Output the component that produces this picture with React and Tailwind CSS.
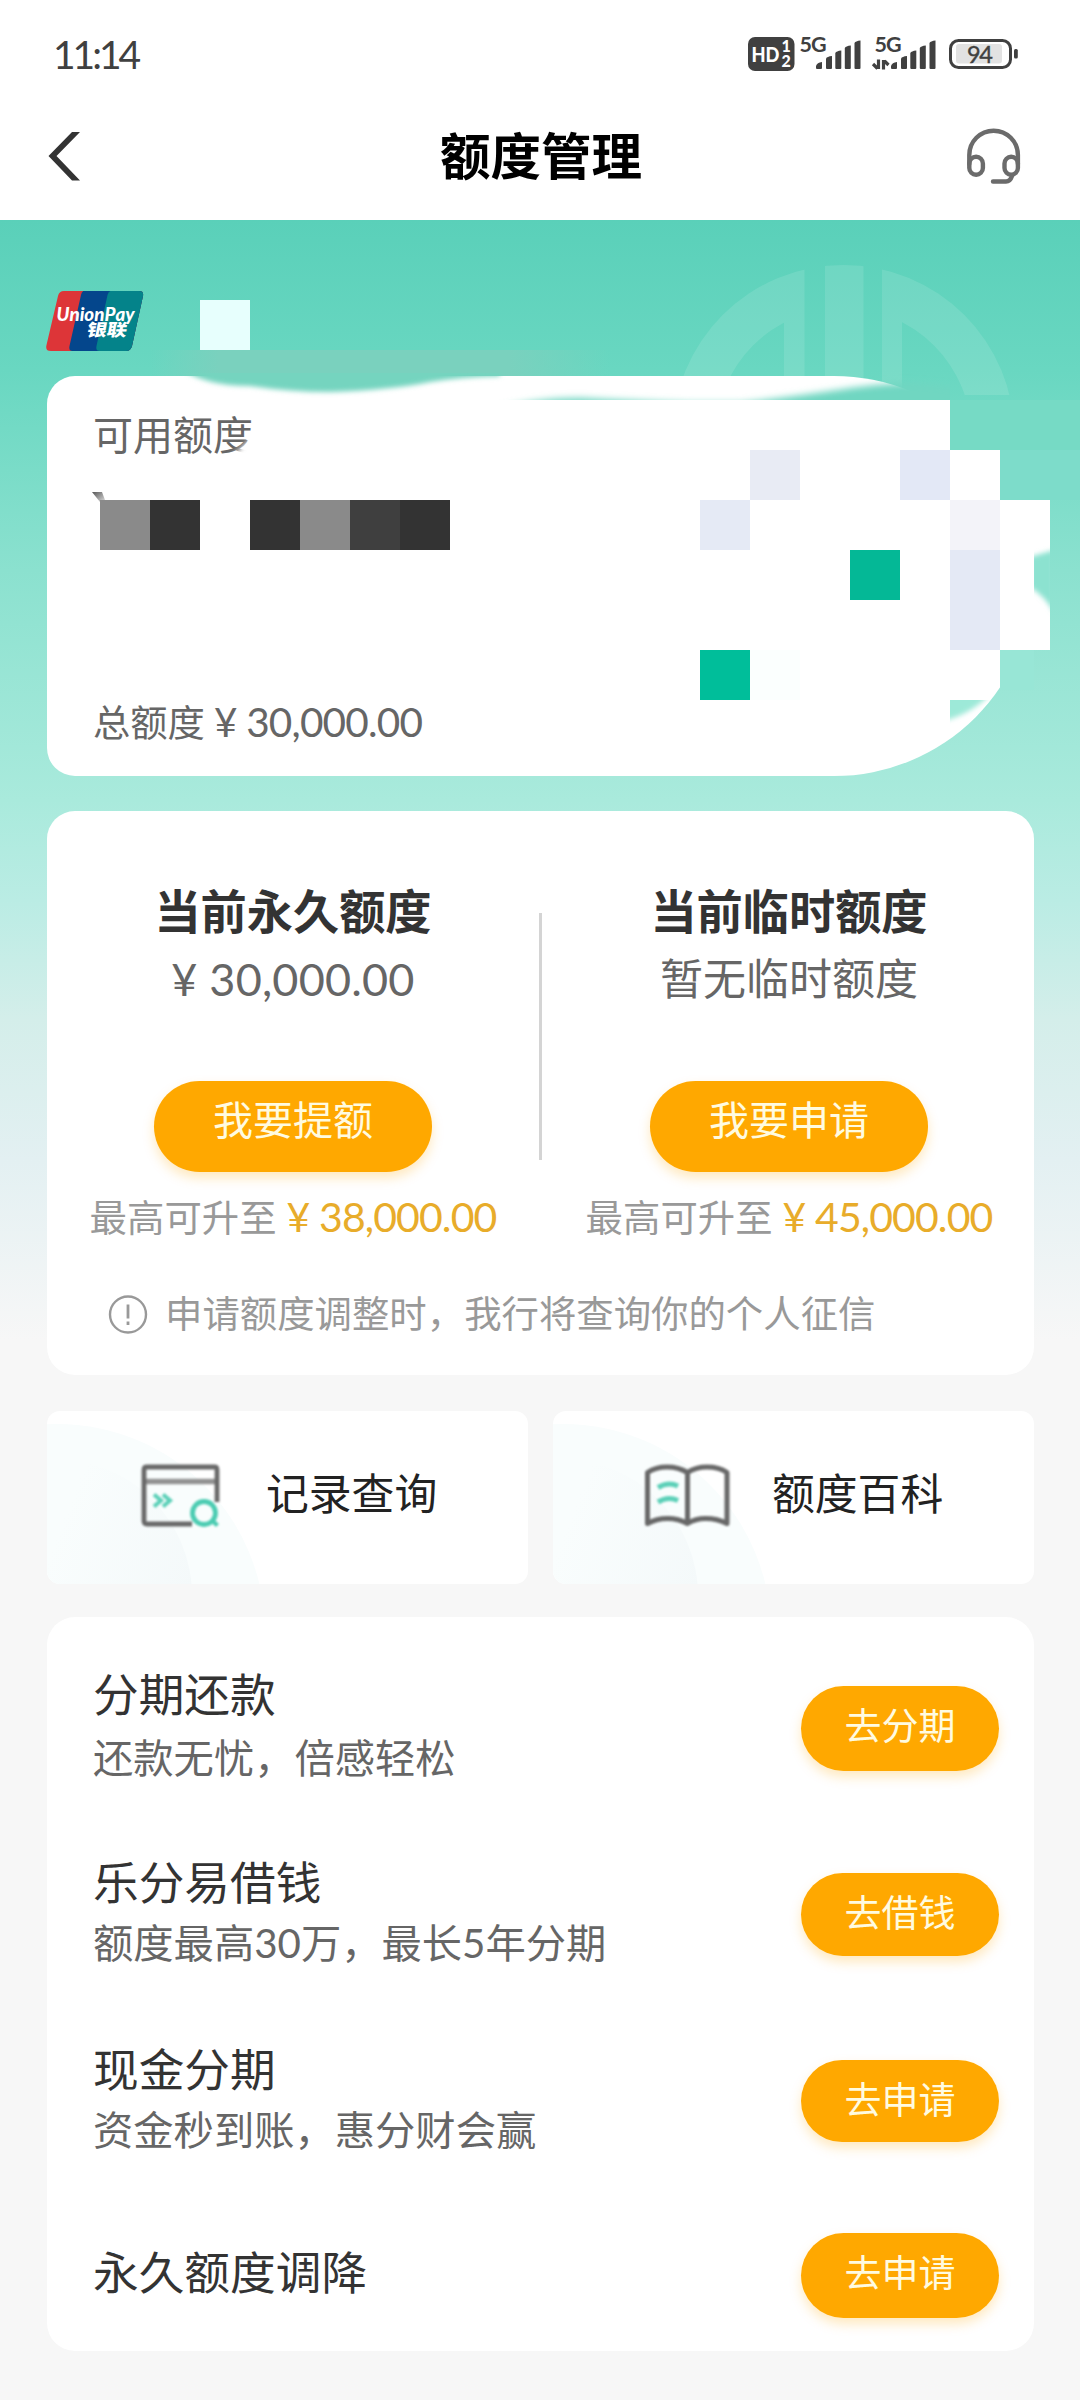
import React from 'react';

const products = [
    { id: 1, title: '分期还款', desc: '还款无忧，倍感轻松', action: '去分期', row: 'mt-[55px]', gap: 'mt-[17px]', button: 'mt-[14px] h-[85px]' },
    { id: 2, title: '乐分易借钱', desc: '额度最高30万，最长5年分期', action: '去借钱', row: 'mt-[79px]', gap: 'mt-[14px]', button: 'mt-[13px] h-[83px]' },
    { id: 3, title: '现金分期', desc: '资金秒到账，惠分财会赢', action: '去申请', row: 'mt-[81px]', gap: 'mt-[14px]', button: 'mt-[13px] h-[82px]' },
    { id: 4, title: '永久额度调降', desc: null, action: '去申请', row: 'mt-[80px]', gap: '', button: 'h-[85px]' },
];

// 50px blocks that cover the private part of the card
const maskBlocks = [
    { x: 200, y: 300, color: '#e7fffd' },
    { x: 100, y: 500, color: '#8a8a8a' },
    { x: 150, y: 500, color: '#333333' },
    { x: 250, y: 500, color: '#333333' },
    { x: 300, y: 500, color: '#8a8a8a' },
    { x: 350, y: 500, color: '#3f3f3f' },
    { x: 400, y: 500, color: '#333333' },
    { x: 750, y: 450, color: '#e8ebf4' },
    { x: 900, y: 450, color: '#e3e8f6' },
    { x: 700, y: 500, color: '#e5eaf5' },
    { x: 950, y: 500, color: '#f3f3f9' },
    { x: 950, y: 550, color: '#e4e9f5' },
    { x: 950, y: 600, color: '#e4e9f5' },
    { x: 850, y: 550, color: '#04b896' },
    { x: 700, y: 650, color: '#00be9a' },
    { x: 750, y: 650, color: '#fbfffe' },
];

function SignalBars() {
    return (
        <g fill="#404040">
            <path d="M0 27v-2q1-3.500 6-4v6q0 1-1 1H1q-1 0-1-1z" />
            <path d="M10 17.500q1-2 6-2.500v12q0 1-1 1h-4q-1 0-1-1z" />
            <path d="M19.300 12q1-2 6-2.500v17.500q0 1-1 1h-4q-1 0-1-1z" />
            <path d="M28.800 7q1-2 6-2.500v22.500q0 1-1 1h-4q-1 0-1-1z" />
            <path d="M38.500 2q1-2 6-2.500v27.500q0 1-1 1h-4q-1 0-1-1z" />
        </g>
    );
}

function StatusIcons() {
    return (
        <svg width="272" height="54" viewBox="748 24 272 54" fontFamily="Lato, sans-serif">
            <rect x="748" y="37" width="46.500" height="34" rx="7" fill="#404040" />
            <text x="751.500" y="61.500" fontSize="20" fontWeight="900" fill="#fff" textLength="28" lengthAdjust="spacingAndGlyphs">HD</text>
            <text x="781.500" y="52.300" fontSize="16" fontWeight="900" fill="#fff">1</text>
            <text x="781.500" y="67" fontSize="16" fontWeight="900" fill="#fff">2</text>
            <text x="799.500" y="52" fontSize="21.500" fontWeight="700" fill="#404040" textLength="27">5G</text>
            <g transform="translate(816 41)"><SignalBars /></g>
            <text x="874.500" y="52" fontSize="21.500" fontWeight="700" fill="#404040" textLength="27">5G</text>
            <path d="M878.500 59.500v9.500M873 64l4.500 4.500M883.500 69.500v-9.500M884.500 61l4 4" stroke="#404040" strokeWidth="3.200" fill="none" />
            <g transform="translate(891 41)"><SignalBars /></g>
            <rect x="950.500" y="40.500" width="60" height="27" rx="8" fill="#fff" stroke="#404040" strokeWidth="3" />
            <rect x="956" y="44" width="46" height="19.500" rx="3" fill="#e2e2e2" />
            <rect x="1014" y="49" width="3.800" height="9.500" rx="1.500" fill="#404040" />
            <text x="967" y="62.500" fontSize="23.500" fill="#404040" stroke="#404040" strokeWidth="0.400" textLength="26">94</text>
        </svg>
    );
}

function Header() {
    return (
        <header className="h-[220px] bg-white">
            <div className="flex h-[108px] items-start justify-between pl-[53px] pr-[60px]">
                <span className="pt-[30px] text-[39px] leading-[48px] tracking-[-3px] text-[#404040]">11:14</span>
                <div className="pt-[24px]">
                    <StatusIcons />
                </div>
            </div>
            <div className="flex h-[96px] items-center justify-between pl-[48px] pr-[58px]">
                <svg width="56" height="50" viewBox="48 131 56 50">
                    <path d="M72 132h8l-23.500 24 23.500 24.500h-8l-23.500-24.500z" fill="#333" />
                </svg>
                <h1 className="ml-[12px] text-[50.5px] leading-[60px] font-bold text-black">额度管理</h1>
                <svg width="56" height="58" viewBox="966 127 56 58" fill="none" stroke="#6b6b6b" strokeWidth="4.400" strokeLinecap="round">
                    <path d="M969.300 164V155a24.300 24.300 0 0 1 48.600 0V164" />
                    <path d="M969.300 163.500a6.800 6.800 0 0 1 13.600 0v4.500a6.800 6.800 0 0 1-13.600 0z" />
                    <path d="M1004.500 163.500a6.700 6.700 0 0 1 13.400 0v4.500a6.700 6.700 0 0 1-13.400 0z" />
                    <path d="M1012 176c-1 3-3 5.500-6 5.500h-13" />
                </svg>
            </div>
        </header>
    );
}

function UnionPayLogo() {
    return (
        <svg width="98" height="61" viewBox="46 290 98 61">
            <defs>
                <clipPath id="unionpay">
                    <path d="M64 291h75q5 0 4 5l-11 50q-1.200 5-6 5H51q-6 0-4.500-6l11.500-49q1.200-5 6-5z" />
                </clipPath>
            </defs>
            <g clipPath="url(#unionpay)">
                <rect x="46" y="290" width="98" height="61" fill="#dd3538" />
                <path d="M87 290q-5 0-6 5l-11.500 51q-1 5 3 5h71V290z" fill="#04468c" />
                <path d="M114 290q-5 0-6.500 5l-11 51q-1 5 3 5h45V290z" fill="#04838a" />
            </g>
            <text x="56.500" y="321" fontFamily="Lato, sans-serif" fontSize="19" fontWeight="900" fontStyle="italic" fill="#fff" textLength="78" lengthAdjust="spacingAndGlyphs">UnionPay</text>
            <text x="86" y="336" fontFamily="'Noto Sans CJK SC', sans-serif" fontSize="17" fontWeight="900" fill="#fff" textLength="40" lengthAdjust="spacingAndGlyphs" transform="translate(63 0) skewX(-10.600)">银联</text>
        </svg>
    );
}

function Watermark() {
    return (
        <svg className="absolute left-0 top-0" width="1080" height="180" viewBox="0 220 1080 180">
            <defs>
                <mask id="ring">
                    <circle cx="843.500" cy="436" r="171" fill="#fff" />
                    <circle cx="843.500" cy="436" r="128" fill="#000" />
                    <rect x="784" y="296" width="118" height="104" fill="#fff" />
                    <rect x="804.500" y="220" width="20.500" height="200" fill="#000" />
                    <rect x="863.500" y="220" width="18.500" height="200" fill="#000" />
                </mask>
            </defs>
            <rect x="660" y="240" width="360" height="155" fill="#fff" fillOpacity="0.110" mask="url(#ring)" />
        </svg>
    );
}

function CardMask() {
    return (
        <svg className="absolute left-0 top-0" width="1080" height="580" viewBox="0 220 1080 580">
            <defs>
                <filter id="soft" x="-10%" y="-100%" width="120%" height="300%">
                    <feGaussianBlur stdDeviation="2.500" />
                </filter>
                <filter id="softer" x="-10%" y="-100%" width="120%" height="300%">
                    <feGaussianBlur stdDeviation="3.500" />
                </filter>
                <clipPath id="cardTop">
                    <rect x="150" y="373" width="800" height="27" />
                </clipPath>
                <clipPath id="cardRight">
                    <rect x="1034" y="540" width="16" height="80" />
                </clipPath>
                <clipPath id="cardCorner">
                    <rect x="950" y="700" width="50" height="40" />
                </clipPath>
                <linearGradient id="strip">
                    <stop offset="0" stopColor="#7ad1be" stopOpacity="0" />
                    <stop offset="0.150" stopColor="#7ad1be" />
                    <stop offset="0.780" stopColor="#7ad1be" />
                    <stop offset="1" stopColor="#7ad1be" stopOpacity="0" />
                </linearGradient>
                <linearGradient id="tip" x1="0" y1="0" x2="1" y2="1">
                    <stop offset="0" stopColor="#555" />
                    <stop offset="1" stopColor="#ddd" />
                </linearGradient>
            </defs>
            <rect x="150" y="350" width="460" height="26" fill="url(#strip)" />
            <g clipPath="url(#cardTop)">
                <path d="M180 368q25 18 70 18q40 6 80 6q60-2 100-10q30-5 70-6v-8z" fill="#74d4bf" filter="url(#soft)" />
                <path d="M490 412q40-14 90-14q60 3 110 5h50q50-6 90-12q50-8 80-8q30 2 50 6v30h-470z" fill="#6fd6c1" filter="url(#softer)" />
            </g>
            <rect x="840" y="400" width="110" height="50" fill="#fff" />
            <rect x="950" y="400" width="130" height="50" fill="#76dac5" />
            <rect x="950" y="450" width="50" height="50" fill="#fff" />
            <rect x="1000" y="450" width="80" height="50" fill="#7ddcca" />
            <rect x="1000" y="500" width="50" height="150" fill="#fff" />
            <g clipPath="url(#cardRight)">
                <path d="M1030 557l24-7v63q-8-16-24-26z" fill="#8ce2d0" filter="url(#soft)" />
            </g>
            <rect x="1000" y="650" width="34" height="40" fill="#98e6d6" />
            <g clipPath="url(#cardCorner)">
                <path d="M940 690h54q-20 24-54 32z" fill="#9de9d8" filter="url(#soft)" />
            </g>
            {maskBlocks.map((b) => (
                <rect key={`${b.x}-${b.y}`} x={b.x} y={b.y} width="50" height="50" fill={b.color} />
            ))}
            <path d="M92 492h10l3 8h-5v2z" fill="url(#tip)" />
            <path d="M262 428l-34 32h34z" fill="#fff" filter="url(#soft)" />
        </svg>
    );
}

function CreditCard() {
    return (
        <section className="relative h-[591px]">
            <Watermark />
            <div className="flex h-[156px] items-start pl-[46px] pt-[70px]">
                <UnionPayLogo />
            </div>
            <div className="ml-[47px] mr-[46px] flex h-[400px] flex-col justify-between rounded-l-[28px] rounded-r-[200px] bg-white pl-[46px] pb-[28px] pt-[34px] text-[#666]">
                <p className="text-[40px] leading-[50px]">可用额度</p>
                <p className="text-[37.3px] leading-[50px]">
                    总额度<span className="ml-[9px] text-[40.5px] tracking-[-0.8px]">¥ 30,000.00</span>
                </p>
            </div>
            <CardMask />
        </section>
    );
}

function LimitColumn({ title, children, action, max }) {
    return (
        <div className="flex w-[494px] flex-col items-center">
            <h2 className="text-[46.2px] leading-[60px] font-bold text-[#333]">{title}</h2>
            {children}
            <button className="mt-[71px] flex h-[91px] w-[278px] justify-center rounded-full bg-[#ffa800] pt-[14px] text-[40px] leading-[50px] text-[#fffbe0] shadow-[0_6px_12px_rgba(255,168,0,0.25)]">
                {action}
            </button>
            <p className="mt-[20px] text-[37.4px] leading-[50px] whitespace-nowrap text-[#999]">
                最高可升至<span className="ml-[10px] text-[41px] tracking-[-0.9px] text-[#e8ac2a]">¥ {max}</span>
            </p>
        </div>
    );
}

function LimitPanel() {
    return (
        <section className="ml-[47px] mr-[46px] h-[564px] rounded-[28px] bg-white pt-[70px]">
            <div className="flex">
                <div className="-ml-[1px]">
                    <LimitColumn title="当前永久额度" action="我要提额" max="38,000.00">
                        <p className="mt-[8px] mb-[1px] text-[45px] leading-[60px] tracking-[0.2px] text-[#666]">¥ 30,000.00</p>
                    </LimitColumn>
                </div>
                <div className="-ml-[1px] mt-[32px] h-[247px] w-[3px] shrink-0 bg-[#d4d4d4]"></div>
                <div>
                    <LimitColumn title="当前临时额度" action="我要申请" max="45,000.00">
                        <p className="mt-[8px] mb-[1px] text-[43px] leading-[60px] text-[#666]">暂无临时额度</p>
                    </LimitColumn>
                </div>
            </div>
            <div className="mt-[46px] flex items-center pl-[61px]">
                <svg width="40" height="42" viewBox="0 0 40 42" fill="none" stroke="#999">
                    <circle cx="20" cy="21.500" r="18" strokeWidth="2.400" />
                    <path d="M20 11.500v14M20 28.500v3.500" strokeWidth="2.800" />
                </svg>
                <p className="ml-[17px] text-[37.4px] leading-[50px] text-[#999]">申请额度调整时，我行将查询你的个人征信</p>
            </div>
        </section>
    );
}

function RecordIcon() {
    return (
        <svg width="80" height="64" viewBox="142 1464 80 64" fill="none" stroke="#686868" strokeWidth="4.800" className="blur-[0.9px]">
            <path d="M145 1481.500h72" stroke="#929292" strokeWidth="5.500" />
            <path d="M193 1524h-45q-3 0-3-3v-51q0-3 3-3h67.500q2.500 0 2.500 3v32" />
            <path d="M155 1494.500l7 6-7 6M164 1494.500l7 6-7 6" stroke="#5cd0b8" strokeWidth="4" />
            <circle cx="205" cy="1513" r="11.500" stroke="#4cccb2" strokeWidth="4.800" />
            <path d="M212.500 1520l6 5.500" stroke="#4cccb2" strokeWidth="4.400" />
        </svg>
    );
}

function BookIcon() {
    return (
        <svg width="86" height="64" viewBox="644 1464 86 64" fill="none" stroke="#686868" strokeWidth="5" strokeLinejoin="round" className="blur-[0.9px]">
            <path d="M687.500 1472.500q-9-5.500-20.500-5.500-11 0-19.500 5.500v51q9-5 20-5 11 0 20 5 8-5 18-5 12 0 21.500 5v-51q-8-5.500-20-5.500-11 0-19.500 5.500zv51" />
            <path d="M658 1487.500q10-6 20-1.500M658 1502q10-6 20-1.500" stroke="#5cd0b8" strokeWidth="5" />
        </svg>
    );
}

function EntryCard({ icon, label, className }) {
    return (
        <div className={`relative flex h-[173px] items-center overflow-hidden rounded-[13px] bg-white ${className}`}>
            <svg className="absolute left-0 top-0" width="240" height="173" viewBox="0 0 240 173">
                <defs>
                    <linearGradient id="petal" x1="0.500" y1="0.300" x2="1" y2="0.500">
                        <stop offset="0" stopColor="#f4f9fa" stopOpacity="0" />
                        <stop offset="1" stopColor="#f4f9fa" />
                    </linearGradient>
                </defs>
                <circle cx="10" cy="221" r="208" fill="#f9fdfd" />
                <circle cx="8" cy="185" r="137" fill="url(#petal)" />
            </svg>
            <div className="relative pb-[3px]">{icon}</div>
            <span className="relative pb-[8px] text-[42.8px] leading-[50px] text-[#222]">{label}</span>
        </div>
    );
}

function ProductList() {
    return (
        <section className="ml-[47px] mr-[46px] mt-[33px] h-[734px] overflow-hidden rounded-[28px] bg-white pl-[46px] pr-[35px]">
            {products.map((p) => (
                <div key={p.id} className={`flex items-start justify-between ${p.row}`}>
                    <div className={p.desc ? '' : 'pt-[17px]'}>
                        <h3 className="text-[45.7px] leading-[46px] text-[#333]">{p.title}</h3>
                        {p.desc && <p className={`text-[40.3px] leading-[46px] text-[#666] ${p.gap}`}>{p.desc}</p>}
                    </div>
                    <button className={`flex w-[198px] shrink-0 justify-center rounded-full bg-[#ffa800] pt-[15px] text-[37px] leading-[50px] text-[#fffbe0] shadow-[0_6px_12px_rgba(255,168,0,0.25)] ${p.button}`}>
                        {p.action}
                    </button>
                </div>
            ))}
        </section>
    );
}

export default function App() {
    return (
        <div lang="zh-CN" className="h-[2400px] w-[1080px] overflow-hidden bg-[#f7f7f7] font-['Lato','Noto_Sans_CJK_SC',sans-serif] [font-kerning:none]">
            <Header />
            <main className="h-[2180px] bg-[linear-gradient(180deg,#5ad0b9_0px,#69d7c1_150px,#8be1cf_350px,#a9eadc_580px,#baece4_680px,#d4eeea_800px,#e3f0f2_940px,#f7f7f7_1120px)]">
                <CreditCard />
                <LimitPanel />
                <div className="ml-[47px] mr-[46px] mt-[36px] flex justify-between">
                    <EntryCard icon={<RecordIcon />} label="记录查询" className="w-[481px] gap-[45px] pl-[94px]" />
                    <EntryCard icon={<BookIcon />} label="额度百科" className="w-[481px] gap-[42px] pl-[91px]" />
                </div>
                <ProductList />
            </main>
        </div>
    );
}
